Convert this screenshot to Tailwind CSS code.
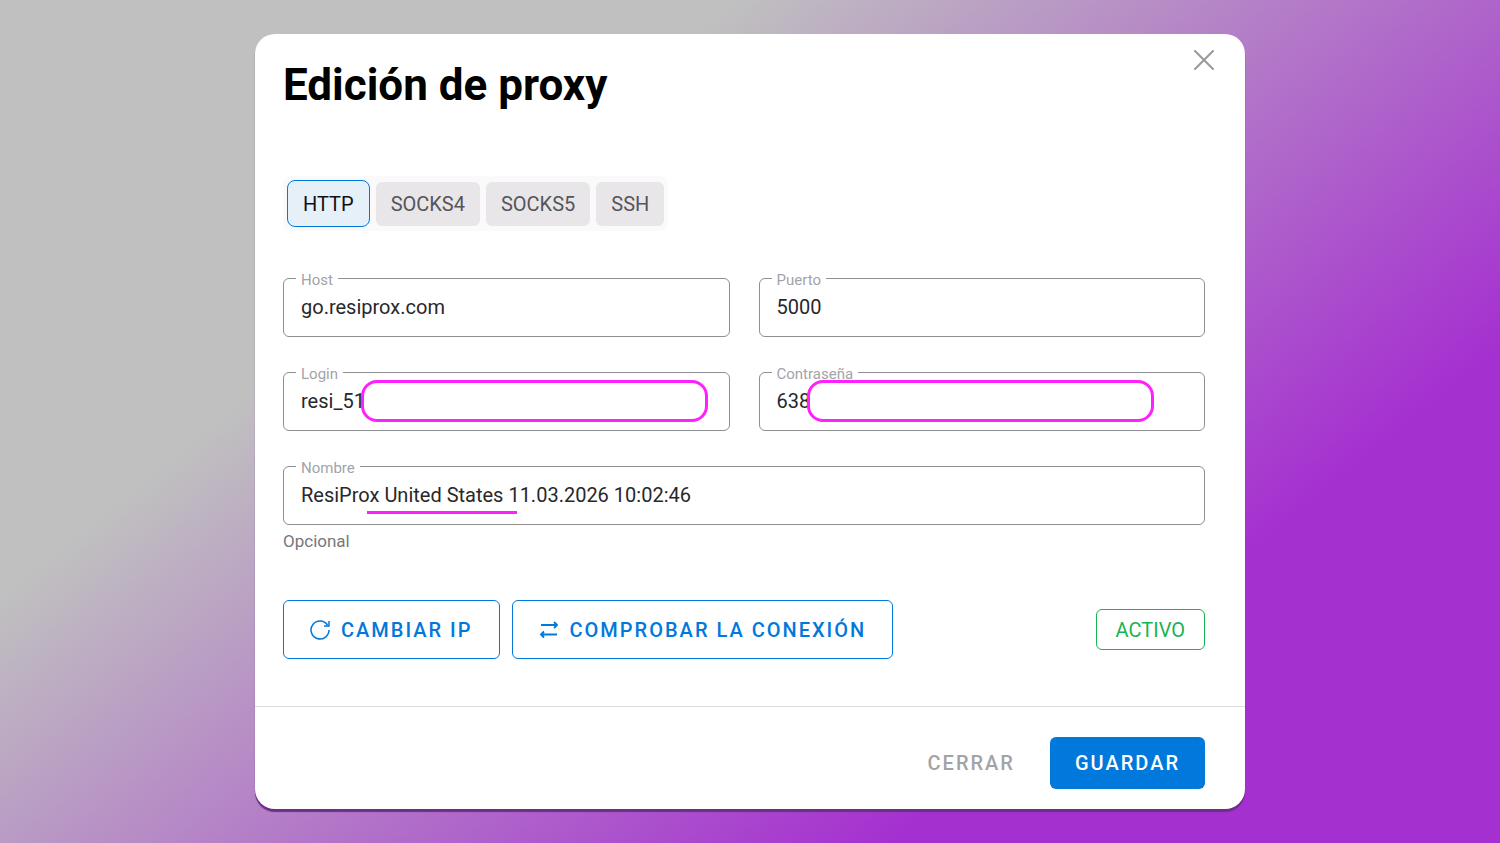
<!DOCTYPE html>
<html lang="es">
<head>
    <meta charset="UTF-8">
    <meta name="viewport" content="width=device-width, initial-scale=1.0">
    <title>Edición de proxy</title>
    <script src="https://cdn.jsdelivr.net/npm/@tailwindcss/browser@4"></script>
</head>
<body class="min-h-screen flex items-center justify-center p-8 font-[Roboto,sans-serif] bg-[linear-gradient(141deg,#c0c0c0_29%,#a530d0_76%)]">
    <main role="dialog" aria-labelledby="title" class="relative w-full max-w-[990px] bg-white rounded-[20px] shadow-[0_3px_1px_#6b2f85]">
        <button type="button" aria-label="Cerrar ventana" class="absolute top-4 right-[31px] text-[#98989c]">
            <svg class="size-5" viewBox="0 0 20 20" fill="none" stroke="currentColor" stroke-width="2" stroke-linecap="round"><path d="M1 1l18 18M19 1L1 19"/></svg>
        </button>

        <form class="pl-7 pr-10 pt-[23px] pb-[47px]">
            <h1 id="title" class="text-[44px] leading-14 font-bold text-black">Edición de proxy</h1>

            <!-- Protocol tabs -->
            <div class="mt-[63px] inline-flex items-center gap-[6px] rounded-lg bg-[#fafafa] p-1 text-xl">
                <button type="button" class="h-[47px] px-[15px] rounded-lg border border-[#0078dc] bg-[#e5f0f9] text-[#111114]">HTTP</button>
                <button type="button" class="h-11 px-[15px] rounded-md bg-[#e8e6e9] text-[#55555a]">SOCKS4</button>
                <button type="button" class="h-11 px-[15px] rounded-md bg-[#e8e6e9] text-[#55555a]">SOCKS5</button>
                <button type="button" class="h-11 px-[15px] rounded-md bg-[#e8e6e9] text-[#55555a]">SSH</button>
            </div>

            <!-- Fields -->
            <div class="mt-[47px] grid grid-cols-2 gap-x-[29px] gap-y-[35px]">
                <div class="relative h-[59px] rounded-md border border-[#8e8e93]">
                    <label for="host" class="absolute -top-[9px] left-3 bg-white px-[5px] text-[15px] leading-5 text-[#a3a3a8]">Host</label>
                    <input id="host" type="text" value="go.resiprox.com" class="size-full px-[17px] pb-[2px] text-xl text-[#28282c] outline-none">
                </div>
                <div class="relative h-[59px] rounded-md border border-[#8e8e93]">
                    <label for="port" class="absolute -top-[9px] left-3 bg-white px-[5px] text-[15px] leading-5 text-[#a3a3a8]">Puerto</label>
                    <input id="port" type="text" value="5000" class="size-full px-[17px] pb-[2px] text-xl text-[#28282c] outline-none">
                </div>
                <div class="relative h-[59px] rounded-md border border-[#8e8e93]">
                    <label for="login" class="absolute -top-[9px] left-3 bg-white px-[5px] text-[15px] leading-5 text-[#a3a3a8]">Login</label>
                    <input id="login" type="text" value="resi_51" class="size-full px-[17px] pb-[2px] text-xl text-[#28282c] outline-none">
                    <span class="absolute top-[7px] left-[77px] h-[42px] w-[347px] rounded-2xl border-[3px] border-[#ff1fff] bg-white"></span>
                </div>
                <div class="relative h-[59px] rounded-md border border-[#8e8e93]">
                    <label for="password" class="absolute -top-[9px] left-3 bg-white px-[5px] text-[15px] leading-5 text-[#a3a3a8]">Contraseña</label>
                    <input id="password" type="text" value="638" class="size-full px-[17px] pb-[2px] text-xl text-[#28282c] outline-none">
                    <span class="absolute top-[7px] left-[47px] h-[42px] w-[347px] rounded-2xl border-[3px] border-[#ff1fff] bg-white"></span>
                </div>
                <div class="relative col-span-2 h-[59px] rounded-md border border-[#8e8e93]">
                    <label for="name" class="absolute -top-[9px] left-3 bg-white px-[5px] text-[15px] leading-5 text-[#a3a3a8]">Nombre</label>
                    <input id="name" type="text" aria-describedby="name-help" value="ResiProx United States 11.03.2026 10:02:46" class="size-full px-[17px] pb-[2px] text-xl text-[#28282c] outline-none">
                    <span class="absolute top-11 left-[83px] h-[3px] w-[150px] bg-[#ff1fff]"></span>
                </div>
            </div>
            <p id="name-help" class="mt-1 text-[17px] leading-6 text-[#77777c]">Opcional</p>

            <!-- Actions -->
            <div class="mt-[47px] flex items-center gap-3 text-xl">
                <button type="button" class="flex h-[59px] items-center gap-[11px] rounded-md border border-[#0078dc] px-[26px] font-medium tracking-[2px] text-[#0078dc]">
                    <svg class="size-5" viewBox="0 0 20 20" fill="none" stroke="currentColor" stroke-width="1.5"><path d="M19 10A9 9 0 1 1 17.500 5M19 1v5h-5"/></svg>
                    CAMBIAR IP
                </button>
                <button type="button" class="flex h-[59px] items-center gap-[11px] rounded-md border border-[#0078dc] px-[26px] font-medium tracking-[2px] text-[#0078dc]">
                    <svg class="size-5" viewBox="0 0 20 20" fill="none" stroke="currentColor" stroke-width="1.8" stroke-linejoin="round"><path d="M2 5h16M15 2l3 3-3 3M18 14.500H2M5 11.500l-3 3 3 3"/></svg>
                    COMPROBAR LA CONEXIÓN
                </button>
                <span class="ml-auto flex h-[41px] items-center rounded-md border border-[#18b352] px-[19px] text-[#18b352]">ACTIVO</span>
            </div>
        </form>

        <footer class="flex justify-end gap-[11px] border-t border-[#d9dde0] pt-[30px] pb-5 pr-10 text-xl font-medium tracking-[2px]">
            <button type="button" class="h-[52px] px-6 text-[#a3a3a6]">CERRAR</button>
            <button type="submit" class="h-[52px] px-[25px] rounded-md bg-[#0078dc] text-white">GUARDAR</button>
        </footer>
    </main>
</body>
</html>
